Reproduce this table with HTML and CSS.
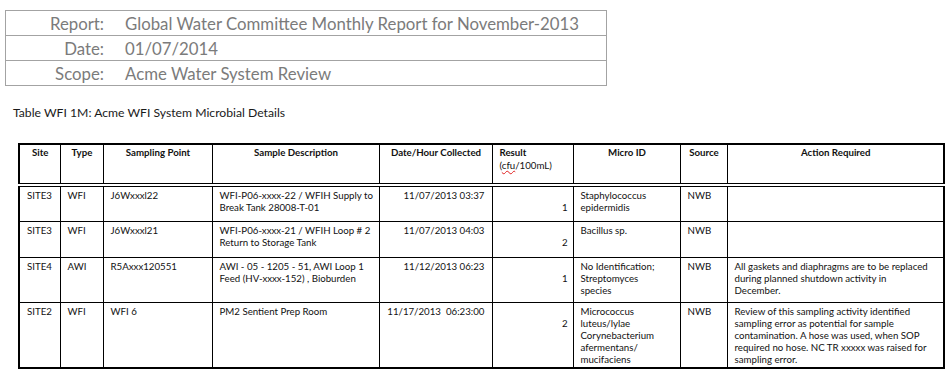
FILE: index.html
```html
<!DOCTYPE html>
<html>
<head>
<meta charset="utf-8">
<link rel="stylesheet" href="styles.css">
</head>
<body>
<div class="page">
  <div class="report">
    <div class="report-row"><span class="label">Report:</span><span class="value">Global Water Committee Monthly Report for November-2013</span></div>
    <div class="report-row"><span class="label">Date:</span><span class="value">01/07/2014</span></div>
    <div class="report-row"><span class="label">Scope:</span><span class="value">Acme Water System Review</span></div>
  </div>
  <p class="caption">Table WFI 1M: Acme WFI System Microbial Details</p>
  <table class="micro">
    <colgroup>
      <col class="c-site"><col class="c-type"><col class="c-point"><col class="c-desc"><col class="c-date"><col class="c-result"><col class="c-micro"><col class="c-source"><col class="c-action">
    </colgroup>
    <thead>
      <tr>
        <th>Site</th>
        <th>Type</th>
        <th>Sampling Point</th>
        <th>Sample Description</th>
        <th>Date/Hour Collected</th>
        <th class="th-left">Result<br><span class="unit">(<span class="spell">cfu</span>/100mL)</span></th>
        <th>Micro ID</th>
        <th>Source</th>
        <th>Action Required</th>
      </tr>
    </thead>
    <tbody>
      <tr class="short">
        <td>SITE3</td>
        <td>WFI</td>
        <td>J6Wxxxl22</td>
        <td>WFI-P06-xxxx-22 / WFIH Supply to<br>Break Tank 28008-T-01</td>
        <td class="date">11/07/2013 03:37</td>
        <td class="num">1</td>
        <td>Staphylococcus<br>epidermidis</td>
        <td>NWB</td>
        <td></td>
      </tr>
      <tr class="short">
        <td>SITE3</td>
        <td>WFI</td>
        <td>J6Wxxxl21</td>
        <td>WFI-P06-xxxx-21 / WFIH Loop # 2<br>Return to Storage Tank</td>
        <td class="date">11/07/2013 04:03</td>
        <td class="num">2</td>
        <td>Bacillus sp.</td>
        <td>NWB</td>
        <td></td>
      </tr>
      <tr class="mid">
        <td>SITE4</td>
        <td>AWI</td>
        <td>R5Axxx120551</td>
        <td>AWI - 05 - 1205 - 51, AWI Loop 1<br>Feed (HV-xxxx-152) , Bioburden</td>
        <td class="date">11/12/2013 06:23</td>
        <td class="num">1</td>
        <td>No Identification;<br>Streptomyces<br>species</td>
        <td>NWB</td>
        <td>All gaskets and diaphragms are to be replaced<br>during planned shutdown activity in<br>December.</td>
      </tr>
      <tr class="tall">
        <td>SITE2</td>
        <td>WFI</td>
        <td>WFI 6</td>
        <td>PM2 Sentient Prep Room</td>
        <td class="date">11/17/2013  06:23:00</td>
        <td class="num">2</td>
        <td>Micrococcus<br>luteus/lylae<br>Corynebacterium<br>afermentans/<br>mucifaciens</td>
        <td>NWB</td>
        <td>Review of this sampling activity identified<br>sampling error as potential for sample<br>contamination. A hose was used, when SOP<br>required no hose. NC TR xxxxx was raised for<br>sampling error.</td>
      </tr>
    </tbody>
  </table>
</div>
</body>
</html>
```
FILE: styles.css
```css
body {
  margin: 0;
  background: #ffffff;
  font-family: Lato, "Open Sans", sans-serif;
  color: #111111;
}

.page {
  padding: 10px 0 0 5px;
}

.report {
  width: 600px;
  border: 1px solid #a3a3a3;
}

.report-row {
  display: flex;
  align-items: center;
  height: 24px;
  border-top: 1px solid #a3a3a3;
  font-size: 16.8px;
  color: #7b7b7b;
}

.report-row:first-child {
  border-top: 0;
}

.label {
  width: 98px;
  text-align: right;
}

.value {
  margin-left: 21px;
}

.caption {
  margin: 19px 0 0 8px;
  font-size: 12.2px;
  line-height: 15px;
  color: #1a1a1a;
}

.micro {
  margin: 23px 0 0 13px;
  width: 925px;
  border-collapse: collapse;
  table-layout: fixed;
  border: 2px solid #000;
  font-size: 9.7px;
  line-height: 12px;
}

.c-site { width: 41px; }
.c-type { width: 43px; }
.c-point { width: 109px; }
.c-desc { width: 167px; }
.c-date { width: 113px; }
.c-result { width: 81px; }
.c-micro { width: 107px; }
.c-source { width: 47px; }
.c-action { width: 217px; }

.micro th {
  height: 33px;
  padding: 1px 6px 4px 7px;
  border: 1px solid #000;
  border-bottom: 4px double #000;
  vertical-align: top;
  text-align: center;
  font-weight: bold;
}

.micro th.th-left {
  text-align: left;
}

.unit {
  font-weight: normal;
  line-height: 14px;
}

.spell {
  text-decoration: underline wavy #e02020;
  text-decoration-thickness: 1px;
  text-underline-offset: 1px;
}

.micro td {
  padding: 2px 4px 5px 7px;
  border: 1px solid #000;
  vertical-align: top;
  text-align: left;
  white-space: nowrap;
}

.micro tr.short {
  height: 36px;
}

.micro tr.mid td {
  padding-bottom: 6px;
}

.micro tr.tall td {
  padding-bottom: 2px;
}

.micro td.date {
  text-align: right;
  white-space: pre;
  padding-right: 7px;
}

.micro td.num {
  padding-top: 14px;
  padding-right: 5px;
  text-align: right;
}
```
